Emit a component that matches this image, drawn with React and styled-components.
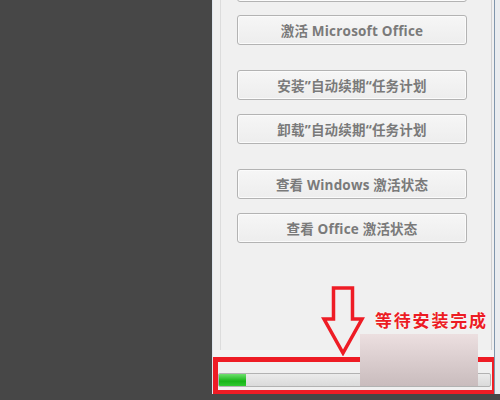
import React from "react";
import styled, { createGlobalStyle } from "styled-components";

const GlobalStyle = createGlobalStyle`
  html, body {
    margin: 0;
    padding: 0;
    background: #474747;
    overflow: hidden;
  }
`;

const Page = styled.div`
  width: 500px;
  height: 400px;
  display: flex;
  align-items: flex-start;
  background: #474747;
  overflow: hidden;
  position: relative;
`;

const Window = styled.div`
  margin-left: 212px;
  width: 281px;
  height: 394px;
  display: flex;
  flex-direction: column;
  background: #f0f0f0;
  border-left: 1px solid #dfe6ee;
  border-right: 1px solid #7f95ab;
  box-shadow: 6px 0 0 #e9ecef;
  overflow: hidden;
`;

const Group = styled.div`
  height: 350px;
  margin-left: 7px;
  margin-right: 2px;
  border-left: 1px solid #dcdcdc;
  border-right: 1px solid #d0d0d0;
  padding: 0 24px 0 16px;
  display: flex;
  flex-direction: column;
  overflow: hidden;
`;

const ButtonList = styled.div`
  margin-top: -28px;
  display: flex;
  flex-direction: column;
  gap: 25px;
`;

const Pair = styled.div`
  display: flex;
  flex-direction: column;
  gap: ${(p) => p.$gap || 14}px;
`;

const Button = styled.div`
  height: 28px;
  display: flex;
  align-items: center;
  justify-content: center;
  border: 1px solid #b3b3b3;
  border-radius: 3px;
  background: linear-gradient(#f6f6f6, #ededed);
  box-shadow: inset 0 0 0 1px #fbfbfb;
  color: #7a7a7a;
  font-family: "Open Sans", "Noto Sans CJK SC", sans-serif;
  font-weight: 700;
  font-size: 13.5px;
  letter-spacing: 0.2px;
  white-space: nowrap;
`;

const Spacer = styled.div`
  height: 7px;
  background: #f3f3f3;
`;

const RedBox = styled.div`
  height: 17px;
  margin-right: -3px;
  border: 5px solid #ee1c25;
  border-bottom-width: 4px;
  padding: 11px 1px 0 0;
  background: #f0f0f0;
`;

const Track = styled.div`
  height: 12px;
  border: 1px solid #b2b2b2;
  border-radius: 2px;
  background: linear-gradient(#ebebeb, #dadada);
  overflow: hidden;
`;

const Fill = styled.div`
  height: 100%;
  background: linear-gradient(#6fe06f, #16b516 60%, #2ec92e);
`;

const Smudge = styled.div`
  position: absolute;
  left: 360px;
  top: 334px;
  width: 118px;
  height: 52px;
  background: linear-gradient(#ecdfe0, #c9bcbd);
`;

const Arrow = styled.svg`
  position: absolute;
  left: 321px;
  top: 286px;
`;

const Note = styled.div`
  position: absolute;
  left: 375px;
  top: 307px;
  color: #ec1c24;
  font-family: "Noto Sans CJK SC", sans-serif;
  font-weight: 700;
  font-size: 17px;
  letter-spacing: 1.8px;
  text-shadow: 0 0 2px #fff;
`;

const groups = [
  { gap: 13, items: ["", "激活  Microsoft Office"] },
  { items: ["安装”自动续期“任务计划", "卸载”自动续期“任务计划"] },
  { items: ["查看 Windows 激活状态", "查看 Office 激活状态"] },
];

export default function App() {
  const progress = 10;
  return (
    <>
      <GlobalStyle />
      <Page>
        <Window>
          <Group>
            <ButtonList>
              {groups.map((g, i) => (
                <Pair key={i} $gap={g.gap}>
                  {g.items.map((t, j) => (
                    <Button key={j}>{t}</Button>
                  ))}
                </Pair>
              ))}
            </ButtonList>
          </Group>
          <Spacer />
          <RedBox>
            <Track>
              <Fill style={{ width: `${progress}%` }} />
            </Track>
          </RedBox>
        </Window>
        <Smudge />
        <Arrow width="44" height="70" viewBox="0 0 44 70">
          <path
            d="M12.5 2 H31.5 V33 H41 L22 67 L3 33 H12.5 Z"
            fill="none"
            stroke="#ee1c25"
            strokeWidth="3.5"
            strokeLinejoin="miter"
          />
        </Arrow>
        <Note>等待安装完成</Note>
      </Page>
    </>
  );
}
